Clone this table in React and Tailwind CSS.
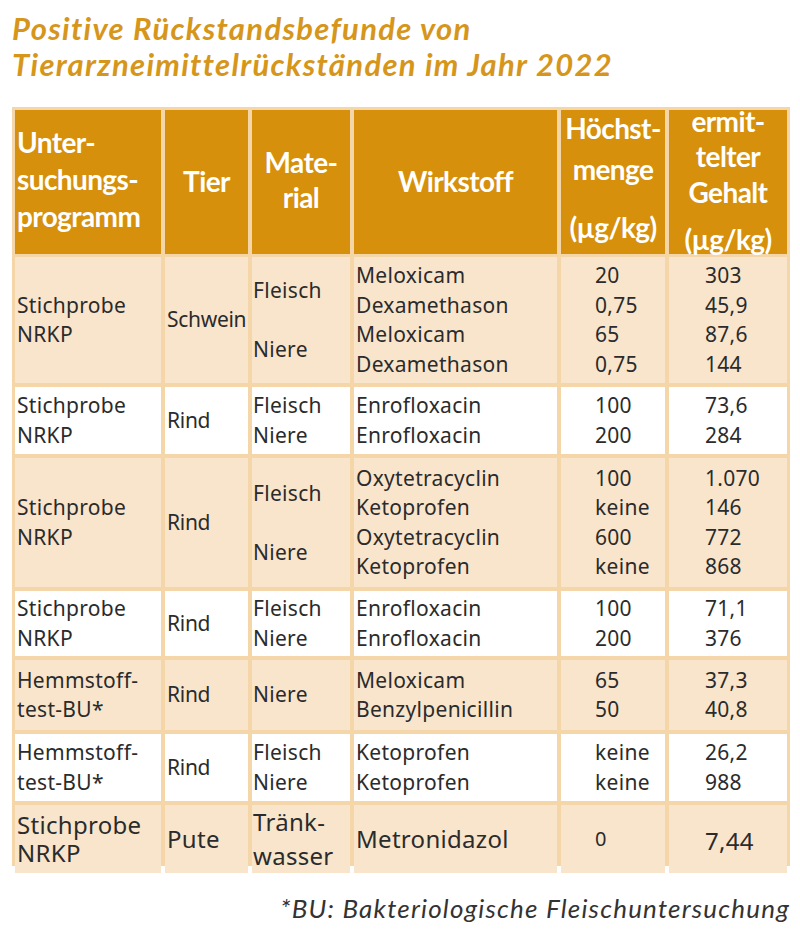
import React from "react";

const COLS = "grid grid-cols-[146px_83px_98px_203px_104px_118px] gap-x-[4px]";

const rows = [
  {
    white: false,
    h: "h-[126px]",
    prog: ["Stichprobe", "NRKP"],
    tier: "Schwein",
    mat: [["Fleisch", 2], ["Niere", 2]],
    wirk: ["Meloxicam", "Dexamethason", "Meloxicam", "Dexamethason"],
    max: ["20", "0,75", "65", "0,75"],
    found: ["303", "45,9", "87,6", "144"],
  },
  {
    white: true,
    h: "h-[67px]",
    prog: ["Stichprobe", "NRKP"],
    tier: "Rind",
    mat: [["Fleisch", 1], ["Niere", 1]],
    wirk: ["Enrofloxacin", "Enrofloxacin"],
    max: ["100", "200"],
    found: ["73,6", "284"],
  },
  {
    white: false,
    h: "h-[129px]",
    prog: ["Stichprobe", "NRKP"],
    tier: "Rind",
    mat: [["Fleisch", 2], ["Niere", 2]],
    wirk: ["Oxytetracyclin", "Ketoprofen", "Oxytetracyclin", "Ketoprofen"],
    max: ["100", "keine", "600", "keine"],
    found: ["1.070", "146", "772", "868"],
  },
  {
    white: true,
    h: "h-[65px]",
    prog: ["Stichprobe", "NRKP"],
    tier: "Rind",
    mat: [["Fleisch", 1], ["Niere", 1]],
    wirk: ["Enrofloxacin", "Enrofloxacin"],
    max: ["100", "200"],
    found: ["71,1", "376"],
  },
  {
    white: false,
    h: "h-[70px]",
    prog: ["Hemmstoff-", "test-BU*"],
    tier: "Rind",
    mat: [["Niere", 1]],
    wirk: ["Meloxicam", "Benzylpenicillin"],
    max: ["65", "50"],
    found: ["37,3", "40,8"],
  },
  {
    white: true,
    h: "h-[67px]",
    prog: ["Hemmstoff-", "test-BU*"],
    tier: "Rind",
    mat: [["Fleisch", 1], ["Niere", 1]],
    wirk: ["Ketoprofen", "Ketoprofen"],
    max: ["keine", "keine"],
    found: ["26,2", "988"],
  },
];

const Lines = ({ items, className = "" }) => (
  <div className={`flex flex-col justify-center ${className}`}>
    {items.map((t, i) => (
      <span key={i} className="leading-[29.5px]">
        {t}
      </span>
    ))}
  </div>
);

const BodyRow = ({ row }) => {
  const cell = row.white ? "bg-white" : "bg-[#f9e5cb]";
  return (
    <div className={`${COLS} ${row.h}`}>
      <Lines items={row.prog} className={`${cell} pl-[2px]`} />
      <div className={`${cell} flex items-center pl-[2px] tracking-[-0.3px]`}>{row.tier}</div>
      <div className={`${cell} flex flex-col justify-center pl-[1px]`}>
        {row.mat.map(([t, span], i) => (
          <span key={i} className={span === 2 ? "leading-[59px]" : "leading-[29.5px]"}>
            {t}
          </span>
        ))}
      </div>
      <Lines items={row.wirk} className={`${cell} pl-[2px]`} />
      <Lines items={row.max} className={`${cell} pl-[34px]`} />
      <Lines items={row.found} className={`${cell} pl-[36px]`} />
    </div>
  );
};

// header cells are laid out from the top so the lines sit where the print has them
const Header = () => (
  <div
    className={`${COLS} h-[143px] text-white font-bold text-[28px] tracking-[-0.6px] font-['Lato',sans-serif]`}
  >
    <div className="bg-[#d6900b] flex flex-col justify-start pl-[2px] pt-[14px] leading-[37px]">
      <span>Unter-</span>
      <span>suchungs-</span>
      <span>programm</span>
    </div>
    <div className="bg-[#d6900b] flex flex-col items-center justify-start pt-[53px] leading-[37px]">
      <span>Tier</span>
    </div>
    <div className="bg-[#d6900b] flex flex-col items-center justify-start pt-[35px] leading-[35px]">
      <span>Mate-</span>
      <span>rial</span>
    </div>
    <div className="bg-[#d6900b] flex flex-col items-center justify-start pt-[53px] leading-[37px]">
      <span>Wirkstoff</span>
    </div>
    <div className="bg-[#d6900b] flex flex-col items-center justify-start leading-[30px]">
      <span className="mt-[3px]">Höchst-</span>
      <span className="mt-[11px]">menge</span>
      <span className="mt-[28px]">(µg/kg)</span>
    </div>
    <div className="bg-[#d6900b] flex flex-col items-center justify-start leading-[30px]">
      <span className="-mt-[4px]">ermit-</span>
      <span className="mt-[5px]">telter</span>
      <span className="mt-[6px]">Gehalt</span>
      <span className="mt-[17px]">(µg/kg)</span>
    </div>
  </div>
);

export default function App() {
  return (
    <div className="w-[800px] min-h-[937px] bg-white px-[12px] pt-[10px]">
      <h1 className="text-[31px] leading-[36px] font-bold italic text-[#d6961b] font-['Lato',sans-serif] tracking-[1.3px]">
        Positive Rückstandsbefunde von
        <br />
        Tierarzneimittelrückständen im Jahr 2022
      </h1>

      <div className="mt-[25px] w-[778px] bg-[#f4d6a8] p-[3px] flex flex-col gap-y-[4px] text-[21px] tracking-[0.3px] text-[#2b2b2b] font-['Noto_Sans',sans-serif]">
        <Header />
        {rows.map((r, i) => (
          <BodyRow key={i} row={r} />
        ))}
        <div className={`${COLS} h-[58px] text-[24px]`}>
          <div className="bg-[#f9e5cb] flex flex-col justify-center pl-[2px] leading-[28px]">
            <span>Stichprobe</span>
            <span>NRKP</span>
          </div>
          <div className="bg-[#f9e5cb] flex items-center pl-[2px]">Pute</div>
          <div className="bg-[#f9e5cb] flex flex-col justify-center pl-[1px] leading-[34px]">
            <span>Tränk-</span>
            <span>wasser</span>
          </div>
          <div className="bg-[#f9e5cb] flex items-center pl-[2px]">Metronidazol</div>
          <div className="bg-[#f9e5cb] flex items-center pl-[34px] text-[20px]">0</div>
          <div className="bg-[#f9e5cb] flex items-center pl-[36px] pt-[4px]">7,44</div>
        </div>
      </div>

      <p className="mt-[26px] w-[778px] text-right text-[26px] leading-[32px] italic tracking-[1.2px] text-[#333] font-['Lato',sans-serif]">
        *BU: Bakteriologische Fleischuntersuchung
      </p>
    </div>
  );
}
